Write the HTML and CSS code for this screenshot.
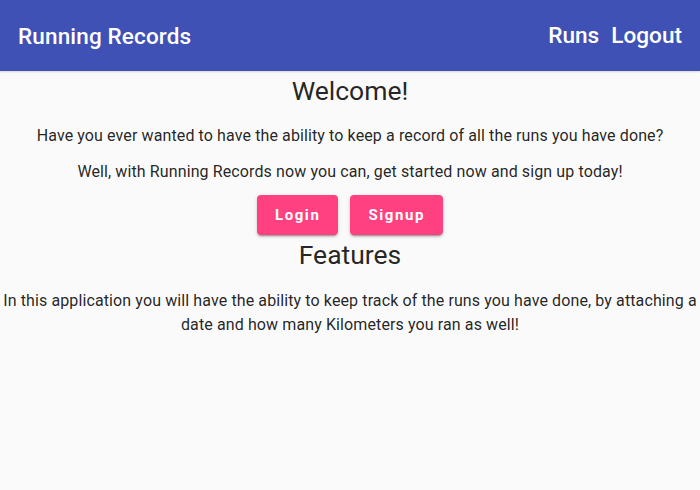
FILE: index.html
```html
<!DOCTYPE html>
<html>
<head>
<meta charset="utf-8">
<link rel="stylesheet" href="styles.css">
</head>
<body>
<header class="appbar">
  <div class="title">Running Records</div>
  <nav class="nav">
    <a class="nav-link">Runs</a>
    <a class="nav-link">Logout</a>
  </nav>
</header>
<main class="content">
  <h1 class="heading">Welcome!</h1>
  <p class="text intro">Have you ever wanted to have the ability to keep a record of all the runs you have done?</p>
  <p class="text cta">Well, with Running Records now you can, get started now and sign up today!</p>
  <div class="buttons">
    <button class="btn">Login</button>
    <button class="btn">Signup</button>
  </div>
  <h2 class="heading">Features</h2>
  <p class="text features">In this application you will have the ability to keep track of the runs you have done, by attaching a date and how many Kilometers you ran as well!</p>
</main>
</body>
</html>
```
FILE: styles.css
```css
html, body {
  margin: 0;
  padding: 0;
  background: #fafafa;
  font-family: Roboto, "Noto Sans", sans-serif;
  color: rgba(0,0,0,0.87);
}
.appbar {
  height: 71px;
  background: #3f51b5;
  color: #fff;
  display: flex;
  align-items: center;
  justify-content: space-between;
  padding: 0 18px;
  box-sizing: border-box;
  box-shadow: 0 1px 2px rgba(0,0,0,0.15);
}
.title {
  font-size: 22.5px;
  font-weight: 500;
  letter-spacing: 0.15px;
}
.nav {
  display: flex;
  gap: 12px;
}
.nav-link {
  font-size: 22.6px;
  font-weight: 500;
  color: #fff;
}
.content {
  text-align: center;
}
.heading {
  margin: 0;
  font-size: 26.5px;
  font-weight: 400;
  line-height: 40px;
}
.text {
  margin: 12px 0;
  font-size: 16px;
  line-height: 24px;
  letter-spacing: 0.11px;
}
.intro {
  margin-top: 13px;
}
.cta {
  margin-bottom: 11px;
}
.features {
  margin-top: 14px;
}
.buttons {
  display: flex;
  justify-content: center;
  gap: 12px;
}
.btn {
  height: 40px;
  padding: 0 18px;
  border: none;
  border-radius: 4px;
  background: #ff4081;
  color: #fff;
  font-family: Roboto, sans-serif;
  font-weight: 700;
  font-size: 15px;
  letter-spacing: 1.6px;
  box-shadow: 0 3px 1px -2px rgba(0,0,0,0.2), 0 2px 2px 0 rgba(0,0,0,0.14), 0 1px 5px 0 rgba(0,0,0,0.12);
}
```
